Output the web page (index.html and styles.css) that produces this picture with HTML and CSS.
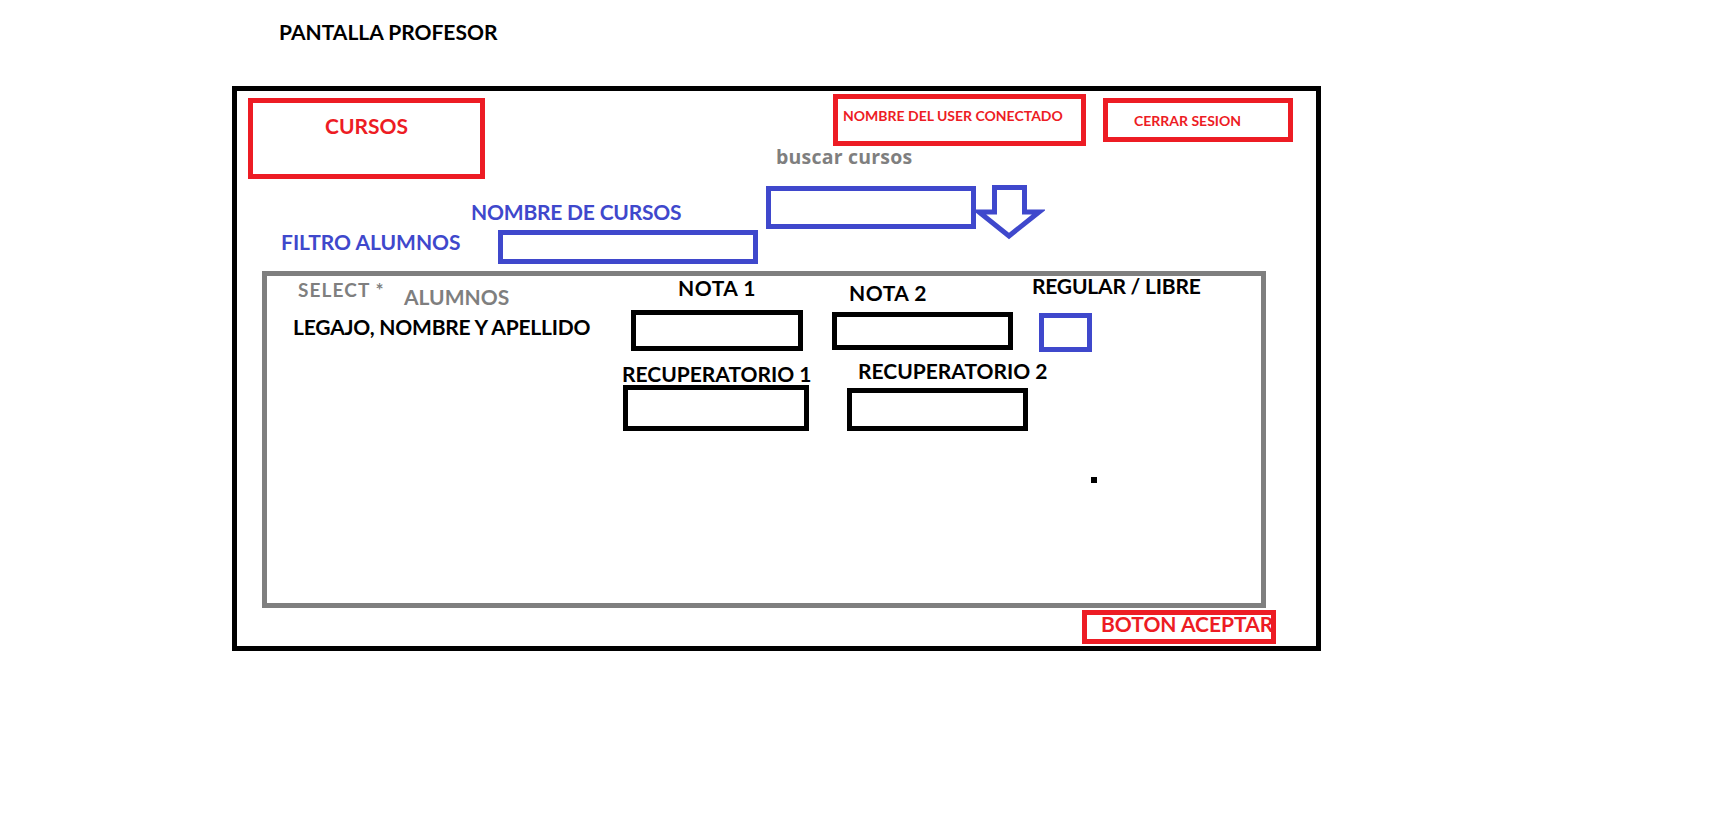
FILE: index.html
```html
<!DOCTYPE html>
<html lang="es">
<head>
  <meta charset="UTF-8">
  <meta name="viewport" content="width=device-width, initial-scale=1.0">
  <title>Pantalla Profesor</title>
  <link rel="stylesheet" href="styles.css">
</head>
<body>
  <h1 class="titulo">PANTALLA PROFESOR</h1>

  <div class="marco">
    <div class="caja-roja cursos">CURSOS</div>
    <div class="caja-roja usuario">NOMBRE DEL USER CONECTADO</div>
    <div class="caja-roja cerrar">CERRAR SESION</div>

    <span class="texto gris buscar">buscar cursos</span>
    <div class="caja-azul buscador"></div>
    <svg class="flecha" width="70" height="60" viewBox="0 0 70 60">
      <polygon points="19.5,4.5 49.5,4.5 49.5,29 64,29 34,53 4,29 19.5,29" fill="none" stroke="#3f48cc" stroke-width="5"/>
    </svg>

    <span class="texto azul nombre-cursos">NOMBRE DE CURSOS</span>
    <span class="texto azul filtro">FILTRO ALUMNOS</span>
    <div class="caja-azul filtro-input"></div>

    <div class="panel">
      <span class="texto gris select">SELECT *</span>
      <span class="texto gris alumnos">ALUMNOS</span>
      <span class="texto legajo">LEGAJO, NOMBRE Y APELLIDO</span>

      <span class="texto nota1">NOTA 1</span>
      <div class="caja-negra nota1-input"></div>
      <span class="texto nota2">NOTA 2</span>
      <div class="caja-negra nota2-input"></div>
      <span class="texto regular">REGULAR / LIBRE</span>
      <div class="caja-azul regular-input"></div>

      <span class="texto recup1">RECUPERATORIO 1</span>
      <div class="caja-negra recup1-input"></div>
      <span class="texto recup2">RECUPERATORIO 2</span>
      <div class="caja-negra recup2-input"></div>

      <div class="punto"></div>
    </div>

    <div class="caja-roja aceptar"><span>BOTON ACEPTAR</span></div>
  </div>
</body>
</html>
```

FILE: styles.css
```css
:root {
  --rojo: #ed1c24;
  --azul: #3f48cc;
  --gris: #7f7f7f;
  --negro: #000000;
}

* {
  margin: 0;
  padding: 0;
  box-sizing: border-box;
}

body {
  background: white;
  font-family: Lato, 'Open Sans', sans-serif;
  font-weight: 700;
  color: var(--negro);
  padding: 21px 0 0 232px;
  min-height: 100vh;
}

.titulo {
  font-size: 21px;
  line-height: 21px;
  font-weight: 700;
  margin: 0 0 44px 47px;
}

.marco {
  position: relative;
  width: 1089px;
  height: 565px;
  border: 5px solid var(--negro);
}

/* cajas dibujadas */
.caja-roja,
.caja-azul,
.caja-negra {
  position: absolute;
  border: 5px solid;
}

.caja-roja {
  border-color: var(--rojo);
  color: var(--rojo);
}

.caja-azul {
  border-color: var(--azul);
}

.caja-negra {
  border-color: var(--negro);
}

.cursos {
  left: 11px;
  top: 7px;
  width: 237px;
  height: 81px;
  font-size: 21px;
  line-height: 21px;
  text-align: center;
  padding-top: 12px;
}

.usuario {
  left: 596px;
  top: 3px;
  width: 253px;
  height: 52px;
  font-size: 14px;
  line-height: 14px;
  padding: 10px 0 0 5px;
}

.cerrar {
  left: 866px;
  top: 7px;
  width: 190px;
  height: 44px;
  font-size: 14px;
  line-height: 14px;
  padding: 11px 0 0 26px;
}

.aceptar {
  left: 845px;
  top: 519px;
  width: 194px;
  height: 34px;
  font-size: 21px;
  line-height: 18px;
  padding-left: 14px;
  overflow: hidden;
  white-space: nowrap;
}

/* textos sueltos */
.texto {
  position: absolute;
  font-size: 21px;
  line-height: 21px;
  white-space: nowrap;
}

.gris {
  color: var(--gris);
}

.azul {
  color: var(--azul);
}

.buscar {
  left: 539px;
  top: 56px;
  font-family: 'Open Sans', Lato, sans-serif;
  font-size: 19.5px;
  line-height: 20px;
  letter-spacing: 0.2px;
}

.buscador {
  left: 529px;
  top: 95px;
  width: 210px;
  height: 43px;
}

.flecha {
  position: absolute;
  left: 738px;
  top: 92px;
}

.nombre-cursos {
  left: 234px;
  top: 110px;
  letter-spacing: -0.2px;
}

.filtro {
  left: 44px;
  top: 140px;
}

.filtro-input {
  left: 261px;
  top: 139px;
  width: 260px;
  height: 34px;
}

.panel {
  position: absolute;
  left: 25px;
  top: 180px;
  width: 1004px;
  height: 337px;
  border: 5px solid var(--gris);
}

.select {
  left: 31px;
  top: 4px;
  font-size: 19px;
  line-height: 19px;
  letter-spacing: 1.1px;
}

.alumnos {
  left: 137px;
  top: 10px;
}

.legajo {
  left: 26px;
  top: 40px;
  letter-spacing: -0.2px;
}

.nota1 {
  left: 411px;
  top: 1px;
  letter-spacing: 0.5px;
}

.nota1-input {
  left: 364px;
  top: 34px;
  width: 172px;
  height: 41px;
}

.nota2 {
  left: 582px;
  top: 6px;
  letter-spacing: 0.5px;
}

.nota2-input {
  left: 565px;
  top: 36px;
  width: 181px;
  height: 38px;
}

.regular {
  left: 765px;
  top: -1px;
  letter-spacing: -0.2px;
}

.regular-input {
  left: 772px;
  top: 37px;
  width: 53px;
  height: 39px;
}

.recup1 {
  left: 355px;
  top: 87px;
}

.recup1-input {
  left: 356px;
  top: 109px;
  width: 186px;
  height: 46px;
}

.recup2 {
  left: 591px;
  top: 84px;
}

.recup2-input {
  left: 580px;
  top: 112px;
  width: 181px;
  height: 43px;
}

.punto {
  position: absolute;
  left: 824px;
  top: 201px;
  width: 6px;
  height: 6px;
  background: var(--negro);
}
```
